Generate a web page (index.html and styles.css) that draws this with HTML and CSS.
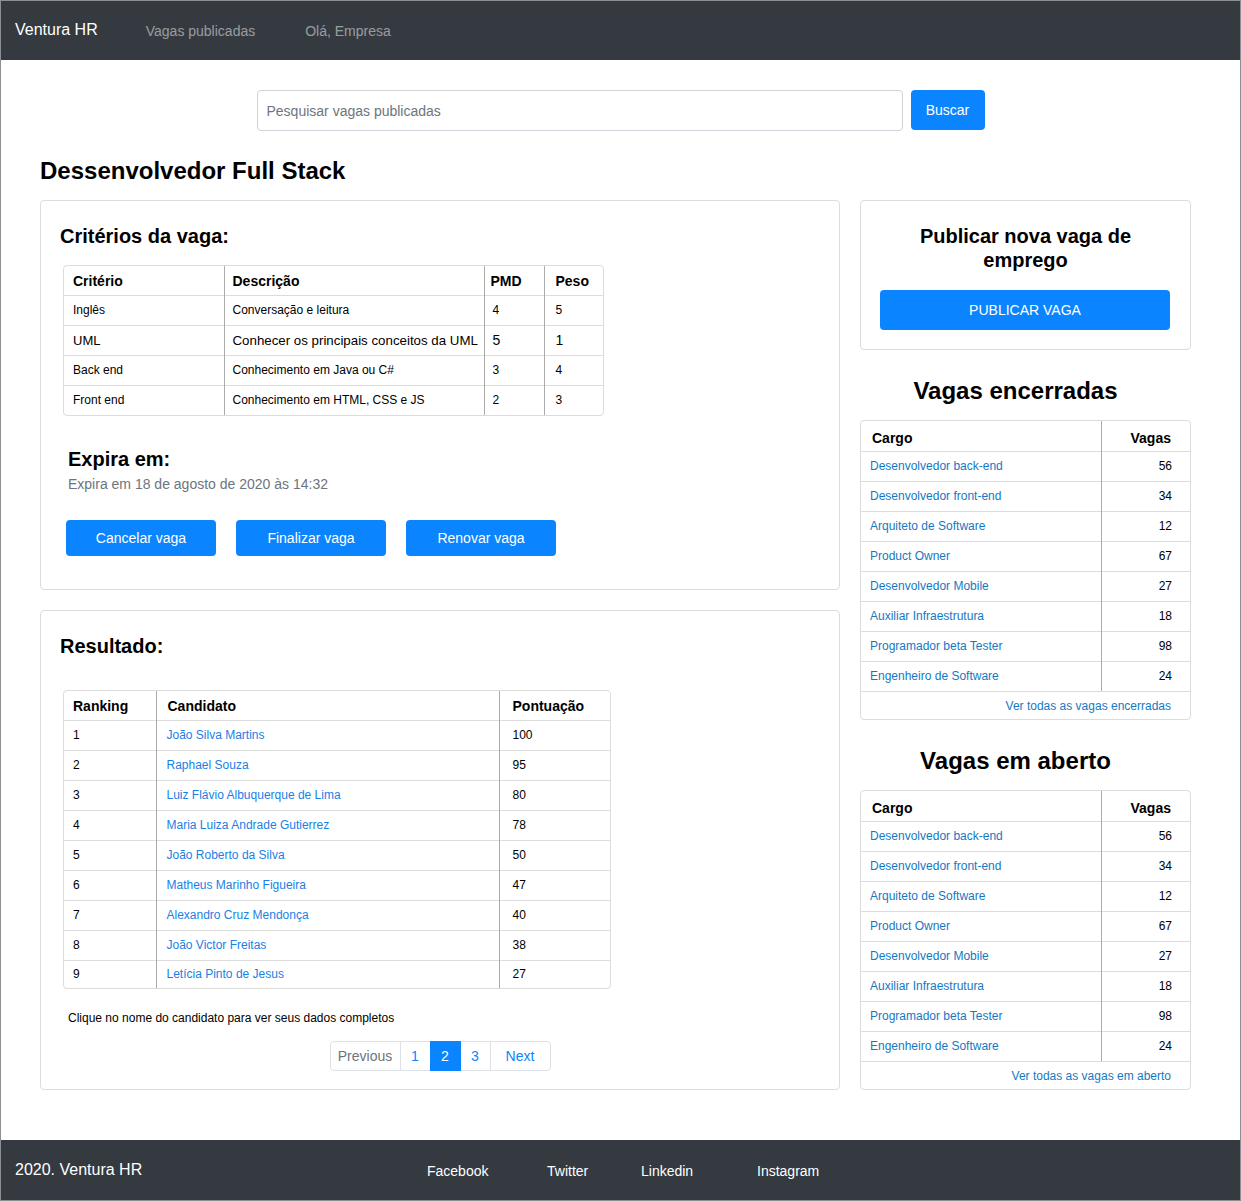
FILE: index.html
```html
<!DOCTYPE html>
<html lang="pt-BR">
<head>
<meta charset="utf-8">
<title>Ventura HR</title>
<link rel="stylesheet" href="styles.css">
</head>
<body>
<div class="page">
  <nav class="navbar">
    <a class="brand" href="#">Ventura HR</a>
    <a class="nav-link" href="#">Vagas publicadas</a>
    <a class="nav-link" href="#">Olá, Empresa</a>
  </nav>

  <form class="search">
    <input class="search-input" type="text" placeholder="Pesquisar vagas publicadas">
    <button class="btn btn-search" type="button">Buscar</button>
  </form>

  <main class="container">
    <h1 class="page-title">Dessenvolvedor Full Stack</h1>
    <div class="grid">
      <div class="left">
        <section class="card card-criterios">
          <h2 class="card-title">Critérios da vaga:</h2>
          <div class="tbl-wrap tbl-crit">
            <table class="tbl">
              <thead>
                <tr><th class="c1">Critério</th><th class="c2">Descrição</th><th class="c3">PMD</th><th class="c4">Peso</th></tr>
              </thead>
              <tbody>
                <tr><td class="c1">Inglês</td><td class="c2">Conversação e leitura</td><td class="c3">4</td><td class="c4">5</td></tr>
                <tr class="lg"><td class="c1">UML</td><td class="c2">Conhecer os principais conceitos da UML</td><td class="c3">5</td><td class="c4">1</td></tr>
                <tr><td class="c1">Back end</td><td class="c2">Conhecimento em Java ou C#</td><td class="c3">3</td><td class="c4">4</td></tr>
                <tr><td class="c1">Front end</td><td class="c2">Conhecimento em HTML, CSS e JS</td><td class="c3">2</td><td class="c4">3</td></tr>
              </tbody>
            </table>
          </div>
          <div class="expira">
            <h2 class="card-title">Expira em:</h2>
            <p class="expira-text">Expira em 18 de agosto de 2020 às 14:32</p>
          </div>
          <div class="actions">
            <button class="btn btn-action" type="button">Cancelar vaga</button>
            <button class="btn btn-action" type="button">Finalizar vaga</button>
            <button class="btn btn-action" type="button">Renovar vaga</button>
          </div>
        </section>

        <section class="card card-result">
          <h2 class="card-title">Resultado:</h2>
          <div class="tbl-wrap tbl-res">
            <table class="tbl">
              <thead>
                <tr><th class="r1">Ranking</th><th class="r2">Candidato</th><th class="r3">Pontuação</th></tr>
              </thead>
              <tbody>
                <tr><td class="r1">1</td><td class="r2"><a href="#">João Silva Martins</a></td><td class="r3">100</td></tr>
                <tr><td class="r1">2</td><td class="r2"><a href="#">Raphael Souza</a></td><td class="r3">95</td></tr>
                <tr><td class="r1">3</td><td class="r2"><a href="#">Luiz Flávio Albuquerque de Lima</a></td><td class="r3">80</td></tr>
                <tr><td class="r1">4</td><td class="r2"><a href="#">Maria Luiza Andrade Gutierrez</a></td><td class="r3">78</td></tr>
                <tr><td class="r1">5</td><td class="r2"><a href="#">João Roberto da Silva</a></td><td class="r3">50</td></tr>
                <tr><td class="r1">6</td><td class="r2"><a href="#">Matheus Marinho Figueira</a></td><td class="r3">47</td></tr>
                <tr><td class="r1">7</td><td class="r2"><a href="#">Alexandro Cruz Mendonça</a></td><td class="r3">40</td></tr>
                <tr><td class="r1">8</td><td class="r2"><a href="#">João Victor Freitas</a></td><td class="r3">38</td></tr>
                <tr class="last"><td class="r1">9</td><td class="r2"><a href="#">Letícia Pinto de Jesus</a></td><td class="r3">27</td></tr>
              </tbody>
            </table>
          </div>
          <p class="hint">Clique no nome do candidato para ver seus dados completos</p>
          <nav class="pagination">
            <span class="page-item disabled prev">Previous</span>
            <a class="page-item num" href="#">1</a>
            <span class="page-item num active">2</span>
            <a class="page-item num" href="#">3</a>
            <a class="page-item next" href="#">Next</a>
          </nav>
        </section>
      </div>

      <aside class="right">
        <section class="card card-publish">
          <h2 class="card-title center">Publicar nova vaga de emprego</h2>
          <button class="btn btn-publish" type="button">PUBLICAR VAGA</button>
        </section>

        <h2 class="side-title">Vagas encerradas</h2>
        <div class="side-tbl">
          <table class="tbl">
            <thead><tr><th class="s1">Cargo</th><th class="s2">Vagas</th></tr></thead>
            <tbody>
              <tr><td class="s1"><a href="#">Desenvolvedor back-end</a></td><td class="s2">56</td></tr>
              <tr><td class="s1"><a href="#">Desenvolvedor front-end</a></td><td class="s2">34</td></tr>
              <tr><td class="s1"><a href="#">Arquiteto de Software</a></td><td class="s2">12</td></tr>
              <tr><td class="s1"><a href="#">Product Owner</a></td><td class="s2">67</td></tr>
              <tr><td class="s1"><a href="#">Desenvolvedor Mobile</a></td><td class="s2">27</td></tr>
              <tr><td class="s1"><a href="#">Auxiliar Infraestrutura</a></td><td class="s2">18</td></tr>
              <tr><td class="s1"><a href="#">Programador beta Tester</a></td><td class="s2">98</td></tr>
              <tr><td class="s1"><a href="#">Engenheiro de Software</a></td><td class="s2">24</td></tr>
            </tbody>
          </table>
          <div class="side-footer"><a href="#">Ver todas as vagas encerradas</a></div>
        </div>

        <h2 class="side-title">Vagas em aberto</h2>
        <div class="side-tbl">
          <table class="tbl">
            <thead><tr><th class="s1">Cargo</th><th class="s2">Vagas</th></tr></thead>
            <tbody>
              <tr><td class="s1"><a href="#">Desenvolvedor back-end</a></td><td class="s2">56</td></tr>
              <tr><td class="s1"><a href="#">Desenvolvedor front-end</a></td><td class="s2">34</td></tr>
              <tr><td class="s1"><a href="#">Arquiteto de Software</a></td><td class="s2">12</td></tr>
              <tr><td class="s1"><a href="#">Product Owner</a></td><td class="s2">67</td></tr>
              <tr><td class="s1"><a href="#">Desenvolvedor Mobile</a></td><td class="s2">27</td></tr>
              <tr><td class="s1"><a href="#">Auxiliar Infraestrutura</a></td><td class="s2">18</td></tr>
              <tr><td class="s1"><a href="#">Programador beta Tester</a></td><td class="s2">98</td></tr>
              <tr><td class="s1"><a href="#">Engenheiro de Software</a></td><td class="s2">24</td></tr>
            </tbody>
          </table>
          <div class="side-footer"><a href="#">Ver todas as vagas em aberto</a></div>
        </div>
      </aside>
    </div>
  </main>

  <footer class="footer">
    <span class="footer-brand">2020. Ventura HR</span>
    <ul class="footer-links">
      <li class="fl-fb"><a href="#">Facebook</a></li>
      <li class="fl-tw"><a href="#">Twitter</a></li>
      <li class="fl-li"><a href="#">Linkedin</a></li>
      <li class="fl-ig"><a href="#">Instagram</a></li>
    </ul>
  </footer>
</div>
</body>
</html>
```

FILE: styles.css
```css
* { box-sizing: border-box; }
html, body { margin: 0; padding: 0; }
body {
  font-family: "Liberation Sans", Arial, Helvetica, sans-serif;
  color: #000;
  background: #fff;
}
a { text-decoration: none; }

.page {
  width: 1241px;
  min-height: 1201px;
  outline: 1px solid #8d8f92;
  outline-offset: -1px;
  display: flex;
  flex-direction: column;
}

/* navbar */
.navbar {
  height: 60px;
  background: #343a40;
  display: flex;
  align-items: center;
  padding-left: 15px;
}
.brand {
  color: #fff;
  font-size: 16px;
  margin-right: 48px;
}
.nav-link {
  color: rgba(255,255,255,0.5);
  font-size: 14px;
  margin-right: 50px;
  padding-top: 2px;
}

/* search */
.search {
  margin: 30px 0 0;
  display: flex;
  justify-content: center;
  gap: 8px;
}
.search-input {
  width: 646px;
  height: 41px;
  border: 1px solid #ced4da;
  border-radius: 4px;
  padding: 0 9px;
  font-family: inherit;
  font-size: 14px;
  color: #495057;
}
.search-input::placeholder { color: #6c757d; }

.btn {
  font-family: inherit;
  border: 0;
  border-radius: 4px;
  background: #0b85ff;
  color: #fff;
  font-size: 14px;
  cursor: pointer;
}
.btn-search { width: 74px; height: 40px; }

/* container */
.container {
  padding: 0 50px 0 40px;
}
.page-title {
  margin: 25px 0 15px;
  font-size: 24px;
  line-height: 29px;
  font-weight: bold;
}
.grid {
  display: grid;
  grid-template-columns: 800px 331px;
  column-gap: 20px;
}
.left { display: flex; flex-direction: column; gap: 20px; }

.card {
  border: 1px solid #dcdcdc;
  border-radius: 4px;
  background: #fff;
}
.card-title {
  margin: 0;
  font-size: 20px;
  line-height: 24px;
  font-weight: bold;
}
.card-title.center { text-align: center; }

.card-criterios { height: 390px; padding: 23px 19px 0; }
.card-result { height: 480px; padding: 23px 19px 0; }

/* tables */
.tbl-wrap {
  border: 1px solid #dcdcdc;
  border-radius: 4px;
  overflow: hidden;
}
.tbl {
  border-collapse: collapse;
  width: 100%;
  table-layout: fixed;
}
.tbl th, .tbl td {
  padding: 0;
  text-align: left;
  vertical-align: middle;
  white-space: nowrap;
}
.tbl th { font-size: 14px; font-weight: bold; height: 29px; padding-top: 2px; }
.tbl td { font-size: 12px; height: 30px; border-top: 1px solid #dcdcdc; }

.tbl-crit { width: 541px; margin: 17px 0 0 3px; }
.tbl-crit .c1 { width: 160px; padding-left: 9px; border-right: 1px solid #ababab; }
.tbl-crit .c2 { width: 260px; padding-left: 8px; border-right: 1px solid #ababab; }
.tbl-crit .c3 { width: 60px; padding-left: 6px; border-right: 1px solid #ababab; }
.tbl-crit .c4 { width: 60px; padding-left: 11px; }
.tbl-crit td.c3 { padding-left: 8px; }
.tbl-crit tr.lg td { font-size: 14px; }
.tbl-crit tr.lg td.c1 { font-size: 13px; }
.tbl-crit tr.lg td.c2 { font-size: 13.3px; }

.expira { margin: 31px 0 0 8px; }
.expira-text {
  margin: 5px 0 0;
  font-size: 14px;
  line-height: 17px;
  color: #6c757d;
}
.actions {
  display: flex;
  gap: 20px;
  margin: 27px 0 0 6px;
}
.btn-action { width: 150px; height: 36px; }

.tbl-res { width: 548px; margin: 32px 0 0 3px; }
.tbl-res .r1 { width: 92px; padding-left: 9px; border-right: 1px solid #ababab; }
.tbl-res .r2 { width: 343px; padding-left: 11px; border-right: 1px solid #ababab; }
.tbl-res .r3 { padding-left: 13px; }
.tbl-res td.r2 { padding-left: 10px; }
.tbl-res tr.last td { height: 28px; }
.tbl-res a { color: #1a7fe6; }

.hint {
  margin: 22px 0 0 8px;
  font-size: 12px;
  line-height: 15px;
}
.pagination {
  display: flex;
  justify-content: center;
  margin: 15px 0 0;
}
.page-item {
  height: 30px;
  display: flex;
  align-items: center;
  justify-content: center;
  font-size: 14px;
  color: #0b85ff;
  border: 1px solid #dee2e6;
  margin-left: -1px;
  background: #fff;
}
.page-item.num { width: 31px; }
.page-item.prev { width: 71px; color: #6c757d; border-radius: 4px 0 0 4px; margin-left: 0; }
.page-item.next { width: 61px; border-radius: 0 4px 4px 0; }
.page-item.active { background: #0b85ff; border-color: #0b85ff; color: #fff; position: relative; }

/* right column */
.right { display: flex; flex-direction: column; }
.card-publish {
  height: 150px;
  padding: 23px 19px 0;
}
.card-publish .card-title { padding: 0 20px; }
.btn-publish {
  display: block;
  width: 290px;
  height: 40px;
  margin-top: 18px;
}
.side-title {
  margin: 26px 0 15px;
  font-size: 24px;
  line-height: 29px;
  font-weight: bold;
  text-align: center;
  padding-right: 20px;
}
.side-tbl {
  border: 1px solid #dcdcdc;
  border-radius: 4px;
  overflow: hidden;
}
.side-tbl th { height: 30px; padding-top: 4px; }
.side-tbl .s1 { width: 240px; padding-left: 11px; border-right: 1px solid #ababab; }
.side-tbl td.s1 { padding-left: 9px; }
.side-tbl .s2 { text-align: right; padding-right: 19px; }
.side-tbl td.s2 { padding-right: 18px; }
.side-tbl a { color: #1479c2; }
.side-footer {
  height: 28px;
  border-top: 1px solid #dcdcdc;
  display: flex;
  align-items: center;
  justify-content: flex-end;
  padding-right: 19px;
  font-size: 12px;
}

/* footer */
.footer {
  margin-top: 50px;
  height: 61px;
  background: #343a40;
  display: flex;
  align-items: center;
  padding: 0 15px 2px;
}
.footer-brand { color: #fff; font-size: 16px; width: 412px; }
.footer-links {
  list-style: none;
  margin: 0;
  padding: 0;
  display: flex;
  padding-top: 3px;
}
.footer-links a { color: #fff; font-size: 14px; }
.fl-fb { width: 120px; }
.fl-tw { width: 94px; }
.fl-li { width: 116px; }
```
